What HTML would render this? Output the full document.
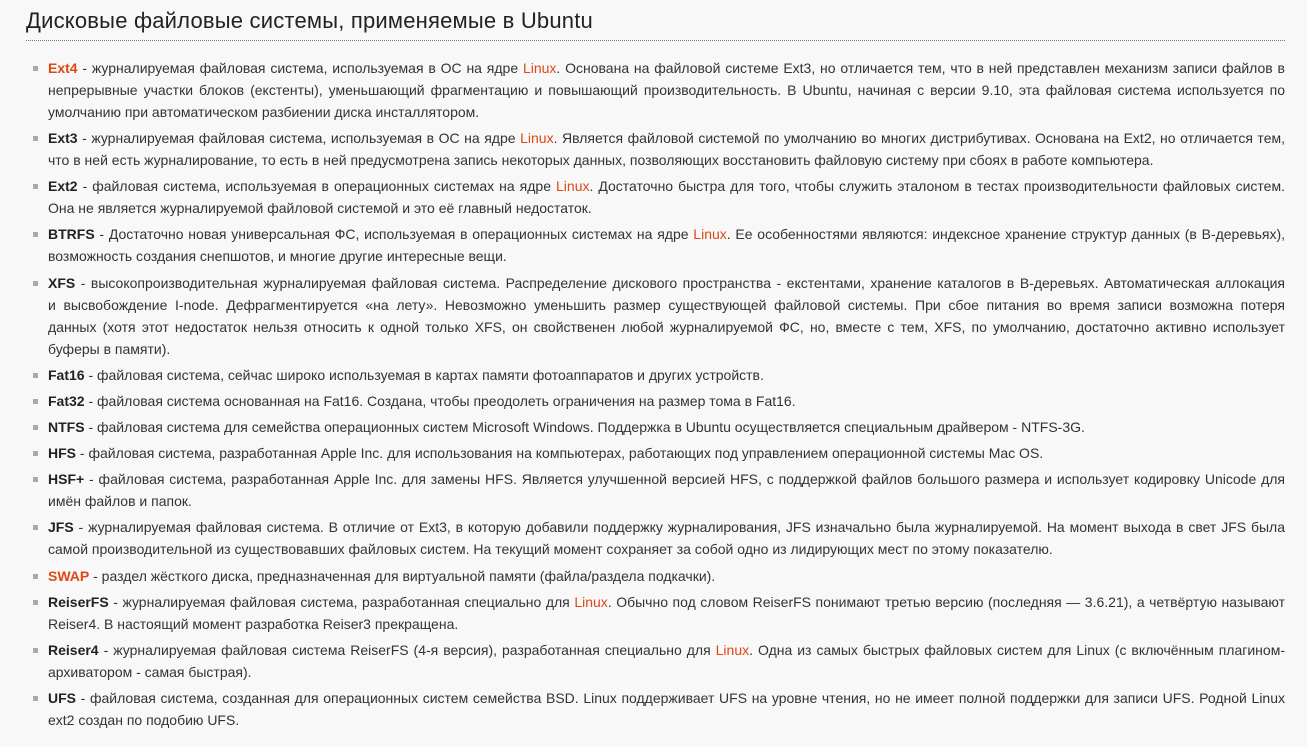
<!DOCTYPE html>
<html><head><meta charset="utf-8"><style>
body{margin:0;background:#f8f8f8;width:1307px;height:747px;overflow:hidden;font-family:"Liberation Sans","DejaVu Sans",sans-serif;color:#333}
h2{position:absolute;left:26px;top:8px;margin:0;font-weight:normal;font-size:22px;color:#222;letter-spacing:0.2px}
.hr{position:absolute;left:26px;top:40px;width:1259px;border-top:1px dotted #777}
ul{position:absolute;left:48px;top:57px;width:1237px;margin:0;padding:0;list-style:none;font-size:14px;letter-spacing:0}
li{position:relative;margin-bottom:4.15px}
li:before{content:"";position:absolute;left:-15px;top:9px;width:5px;height:5px;background:#aaa}
.l{display:block;height:22px;line-height:22px;white-space:nowrap;text-align:justify;text-align-last:justify}
.e{display:block;height:22px;line-height:22px;white-space:nowrap}
b{color:#222}
.o{color:#dd4814}
</style></head><body>
<h2>Дисковые файловые системы, применяемые в Ubuntu</h2>
<div class="hr"></div>
<ul>
<li><span class="l"><b class="o">Ext4</b> - журналируемая файловая система, используемая в ОС на ядре <span class="o">Linux</span>. Основана на файловой системе Ext3, но отличается тем, что в ней представлен механизм записи файлов в</span><span class="l">непрерывные участки блоков (екстенты), уменьшающий фрагментацию и повышающий производительность. В Ubuntu, начиная с версии 9.10, эта файловая система используется по</span><span class="e">умолчанию при автоматическом разбиении диска инсталлятором.</span></li>
<li><span class="l"><b>Ext3</b> - журналируемая файловая система, используемая в ОС на ядре <span class="o">Linux</span>. Является файловой системой по умолчанию во многих дистрибутивах. Основана на Ext2, но отличается тем,</span><span class="e">что в ней есть журналирование, то есть в ней предусмотрена запись некоторых данных, позволяющих восстановить файловую систему при сбоях в работе компьютера.</span></li>
<li><span class="l"><b>Ext2</b> - файловая система, используемая в операционных системах на ядре <span class="o">Linux</span>. Достаточно быстра для того, чтобы служить эталоном в тестах производительности файловых систем.</span><span class="e">Она не является журналируемой файловой системой и это её главный недостаток.</span></li>
<li><span class="l"><b>BTRFS</b> - Достаточно новая универсальная ФС, используемая в операционных системах на ядре <span class="o">Linux</span>. Ее особенностями являются: индексное хранение структур данных (в B-деревьях),</span><span class="e">возможность создания снепшотов, и многие другие интересные вещи.</span></li>
<li><span class="l"><b>XFS</b> - высокопроизводительная журналируемая файловая система. Распределение дискового пространства - екстентами, хранение каталогов в B-деревьях. Автоматическая аллокация</span><span class="l">и высвобождение I-node. Дефрагментируется «на лету». Невозможно уменьшить размер существующей файловой системы. При сбое питания во время записи возможна потеря</span><span class="l">данных (хотя этот недостаток нельзя относить к одной только XFS, он свойственен любой журналируемой ФС, но, вместе с тем, XFS, по умолчанию, достаточно активно использует</span><span class="e">буферы в памяти).</span></li>
<li><span class="e"><b>Fat16</b> - файловая система, сейчас широко используемая в картах памяти фотоаппаратов и других устройств.</span></li>
<li><span class="e"><b>Fat32</b> - файловая система основанная на Fat16. Создана, чтобы преодолеть ограничения на размер тома в Fat16.</span></li>
<li><span class="e"><b>NTFS</b> - файловая система для семейства операционных систем Microsoft Windows. Поддержка в Ubuntu осуществляется специальным драйвером - NTFS-3G.</span></li>
<li><span class="e"><b>HFS</b> - файловая система, разработанная Apple Inc. для использования на компьютерах, работающих под управлением операционной системы Mac OS.</span></li>
<li><span class="l"><b>HSF+</b> - файловая система, разработанная Apple Inc. для замены HFS. Является улучшенной версией HFS, с поддержкой файлов большого размера и использует кодировку Unicode для</span><span class="e">имён файлов и папок.</span></li>
<li><span class="l"><b>JFS</b> - журналируемая файловая система. В отличие от Ext3, в которую добавили поддержку журналирования, JFS изначально была журналируемой. На момент выхода в свет JFS была</span><span class="e">самой производительной из существовавших файловых систем. На текущий момент сохраняет за собой одно из лидирующих мест по этому показателю.</span></li>
<li><span class="e"><b class="o">SWAP</b> - раздел жёсткого диска, предназначенная для виртуальной памяти (файла/раздела подкачки).</span></li>
<li><span class="l"><b>ReiserFS</b> - журналируемая файловая система, разработанная специально для <span class="o">Linux</span>. Обычно под словом ReiserFS понимают третью версию (последняя — 3.6.21), а четвёртую называют</span><span class="e">Reiser4. В настоящий момент разработка Reiser3 прекращена.</span></li>
<li><span class="l"><b>Reiser4</b> - журналируемая файловая система ReiserFS (4-я версия), разработанная специально для <span class="o">Linux</span>. Одна из самых быстрых файловых систем для Linux (с включённым плагином-</span><span class="e">архиватором - самая быстрая).</span></li>
<li><span class="l"><b>UFS</b> - файловая система, созданная для операционных систем семейства BSD. Linux поддерживает UFS на уровне чтения, но не имеет полной поддержки для записи UFS. Родной Linux</span><span class="e">ext2 создан по подобию UFS.</span></li>
</ul>
</body></html>
